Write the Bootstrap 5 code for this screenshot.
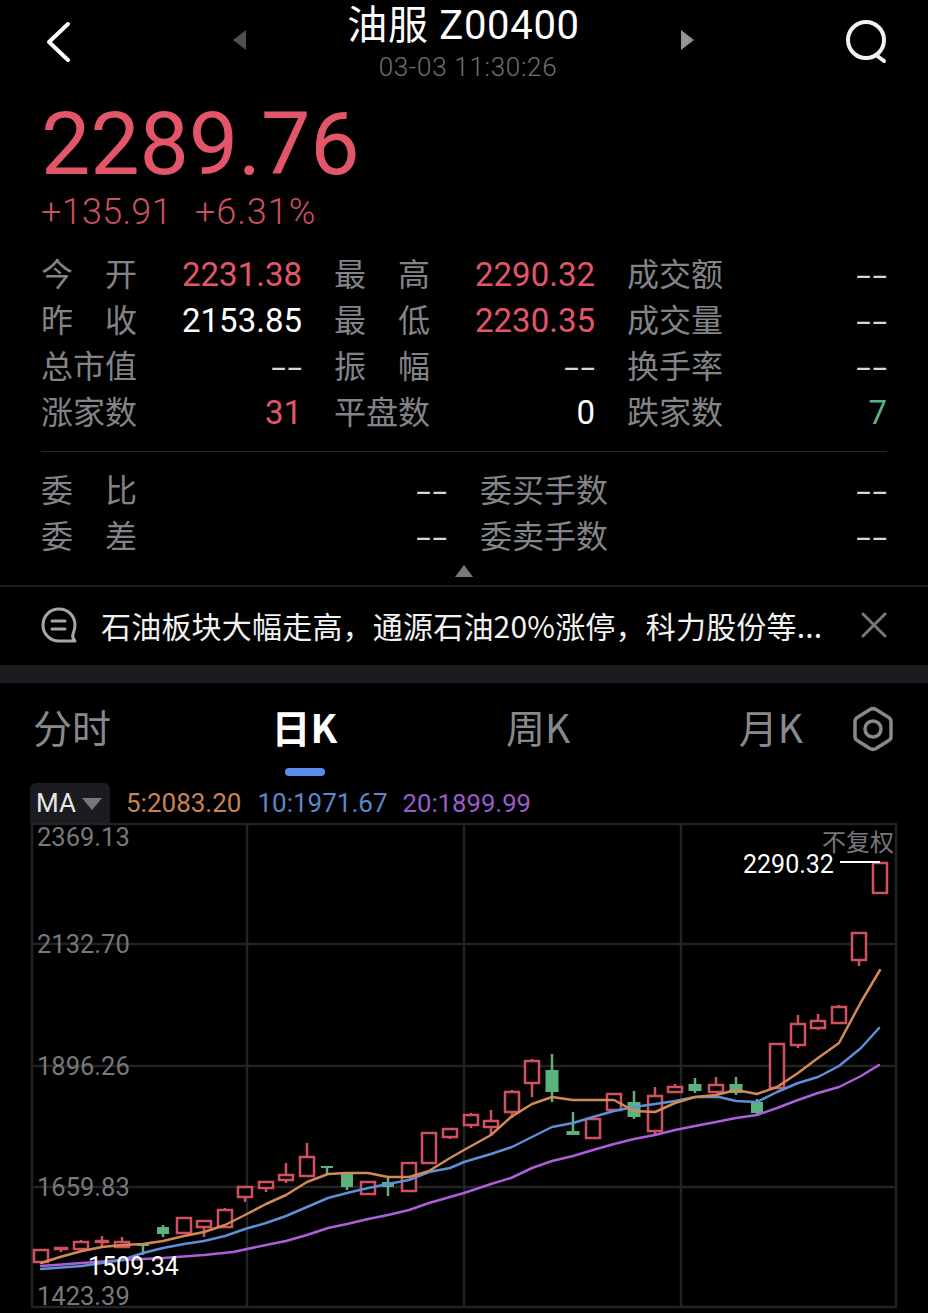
<!DOCTYPE html>
<html lang="zh">
<head>
    <meta charset="UTF-8">
    <meta name="viewport" content="width=device-width, initial-scale=1.0">
    <title>油服 Z00400</title>
    <link href="https://cdn.jsdelivr.net/npm/bootstrap@5.3.0/dist/css/bootstrap.min.css" rel="stylesheet">
    <style>
        html, body { height: 1313px; overflow: hidden; }
        body {
            background: #000;
            color: #fff;
            font-family: Roboto, "Noto Sans CJK SC", sans-serif;
        }

        .top-bar { height: 92px; padding: 0 38px 9px 45px; }
        .top-side { width: 48px; }
        .title-box { width: 461px; margin-right: 8px; }
        .title-main { font-size: 40px; line-height: 50px; letter-spacing: .7px; }
        .title-time { font-size: 26px; line-height: 32px; color: #6e6f74; font-weight: 300; letter-spacing: .7px; padding-left: 9px; }
        .side-arrow { width: 0; height: 0; border-top: 10px solid transparent; border-bottom: 10px solid transparent; margin-bottom: 4px; }
        .arrow-l { border-right: 13px solid #4d4e51; }
        .arrow-r { border-left: 13px solid #929398; }

        .price-box { padding: 5px 41px 0; height: 154px; color: #e3566a; }
        .price-now { font-size: 88px; line-height: 94px; font-weight: 400; letter-spacing: -.2px; }
        .price-sub { font-size: 36px; line-height: 42px; font-weight: 300; color: #cd5061; gap: 23px; letter-spacing: .3px; }
        .price-pct { letter-spacing: 1px; }

        .stat-grid { padding: 0 41px; }
        .stat-row { display: grid; grid-template-columns: 261px 261px 260px; gap: 32px; height: 46px; align-items: center; }
        .stat-row-wide { display: grid; grid-template-columns: 406px 407px; gap: 33px; height: 46px; align-items: center; }
        .stat-cell { display: flex; justify-content: space-between; align-items: center; font-size: 32px; line-height: 46px; }
        .stat-label { color: #838488; font-size: 32px; font-family: "Noto Sans CJK SC", sans-serif; display: flex; justify-content: space-between; width: 96px; }
        .stat-label-long { width: 128px; }
        .stat-num { font-size: 33px; padding-top: 6px; }
        .num-dash { color: #d8d8da; font-size: 32px; letter-spacing: 1px; padding-top: 6px; margin-right: -2px; transform: scaleX(1.65); transform-origin: right center; }
        .num-up { color: #e3566a; }
        .num-down { color: #5ab27f; }
        .stat-line { border-top: 1px solid #232427; margin: 21px 41px 10px; }

        .fold-bar { height: 33px; border-bottom: 2px solid #1e1f22; }
        .fold-arrow { width: 0; height: 0; border-left: 9px solid transparent; border-right: 9px solid transparent; border-bottom: 12px solid #77787c; margin-top: 11px; }

        .news-row { height: 78px; padding: 0 41px 2px; }
        .news-text { font-size: 30px; letter-spacing: .2px; font-family: "Noto Sans CJK SC", sans-serif; margin-left: 23px; flex: 1; white-space: nowrap; color: #f2f2f2; }
        .band { height: 18px; background: #1b1c1f; }

        .tab-row { height: 100px; padding: 0 33px 14px; }
        .tab-list { width: 770px; }
        .tab-item { position: relative; font-size: 39px; line-height: 48px; color: #88898d; font-family: "Noto Sans CJK SC", sans-serif; }
        .tab-active { color: #fff; font-weight: 700; }
        .tab-active::after { content: ""; position: absolute; left: 13px; width: 40px; height: 8px; bottom: -26px; border-radius: 4px; background: #5b8def; }
        .tab-gear { margin-top: 6px; margin-right: 1px; }

        .ma-row { height: 41px; padding-left: 30px; font-size: 26px; }
        .ma-btn { width: 80px; height: 41px; background: #1b1c1f; border-radius: 6px 6px 0 0; padding-left: 6px; gap: 6px; color: #e6e6e6; }
        .ma-caret { width: 0; height: 0; border-left: 10px solid transparent; border-right: 10px solid transparent; border-top: 12px solid #77787c; }
        .ma-five { color: #c98450; margin-left: 16px; }
        .ma-ten { color: #5d87c9; margin-left: 16px; }
        .ma-twenty { color: #9b5bcb; margin-left: 15px; font-size: 25.7px; }

        .chart-svg { display: block; overflow: visible; }
        .chart-svg text { font-family: Roboto, "Noto Sans CJK SC", sans-serif; font-size: 25.5px; }
        .chart-svg .axis-label { fill: #77787c; }
        .chart-svg .peak-label { fill: #fff; font-size: 25px; }
    </style>
</head>
<body>
    <div class="top-bar d-flex align-items-center justify-content-between">
        <div class="top-side">
            <svg width="28" height="42" viewBox="0 0 28 42"><path d="M23 3 4 21l19 18" fill="none" stroke="#fff" stroke-width="4" stroke-linecap="round" stroke-linejoin="round"/></svg>
        </div>
        <div class="title-box d-flex align-items-center justify-content-between">
            <span class="side-arrow arrow-l"></span>
            <div class="text-center">
                <div class="title-main">油服 Z00400</div>
                <div class="title-time">03-03 11:30:26</div>
            </div>
            <span class="side-arrow arrow-r"></span>
        </div>
        <div class="top-side text-end">
            <svg width="46" height="46" viewBox="0 0 46 46"><circle cx="22" cy="21" r="18" fill="none" stroke="#f2f2f2" stroke-width="4"/><path d="M32 36l8 6" fill="none" stroke="#f2f2f2" stroke-width="4" stroke-linecap="round"/></svg>
        </div>
    </div>

    <div class="price-box">
        <div class="price-now">2289.76</div>
        <div class="price-sub d-flex"><span>+135.91</span><span class="price-pct">+6.31%</span></div>
    </div>

    <div class="stat-grid">
        <div class="stat-row">
            <div class="stat-cell"><span class="stat-label"><span>今</span><span>开</span></span><span class="stat-num num-up">2231.38</span></div>
            <div class="stat-cell"><span class="stat-label"><span>最</span><span>高</span></span><span class="stat-num num-up">2290.32</span></div>
            <div class="stat-cell"><span class="stat-label">成交额</span><span class="num-dash">--</span></div>
        </div>
        <div class="stat-row">
            <div class="stat-cell"><span class="stat-label"><span>昨</span><span>收</span></span><span class="stat-num">2153.85</span></div>
            <div class="stat-cell"><span class="stat-label"><span>最</span><span>低</span></span><span class="stat-num num-up">2230.35</span></div>
            <div class="stat-cell"><span class="stat-label">成交量</span><span class="num-dash">--</span></div>
        </div>
        <div class="stat-row">
            <div class="stat-cell"><span class="stat-label">总市值</span><span class="num-dash">--</span></div>
            <div class="stat-cell"><span class="stat-label"><span>振</span><span>幅</span></span><span class="num-dash">--</span></div>
            <div class="stat-cell"><span class="stat-label">换手率</span><span class="num-dash">--</span></div>
        </div>
        <div class="stat-row">
            <div class="stat-cell"><span class="stat-label">涨家数</span><span class="stat-num num-up">31</span></div>
            <div class="stat-cell"><span class="stat-label">平盘数</span><span class="stat-num">0</span></div>
            <div class="stat-cell"><span class="stat-label">跌家数</span><span class="stat-num num-down">7</span></div>
        </div>
    </div>
    <div class="stat-line"></div>
    <div class="stat-grid">
        <div class="stat-row-wide">
            <div class="stat-cell"><span class="stat-label"><span>委</span><span>比</span></span><span class="num-dash">--</span></div>
            <div class="stat-cell"><span class="stat-label stat-label-long">委买手数</span><span class="num-dash">--</span></div>
        </div>
        <div class="stat-row-wide">
            <div class="stat-cell"><span class="stat-label"><span>委</span><span>差</span></span><span class="num-dash">--</span></div>
            <div class="stat-cell"><span class="stat-label stat-label-long">委卖手数</span><span class="num-dash">--</span></div>
        </div>
    </div>
    <div class="fold-bar d-flex justify-content-center"><span class="fold-arrow"></span></div>

    <div class="news-row d-flex align-items-center">
        <svg width="37" height="36" viewBox="0 0 37 36"><path d="M18 2C9 2 2 9 2 18s7 16 16 16h16c-2-2-3-4-2-7 1-3 2-5 2-9 0-9-7-16-16-16Z" fill="none" stroke="#a6a7ab" stroke-width="3" stroke-linejoin="round"/><path d="M11 14h13M11 22h13" stroke="#a6a7ab" stroke-width="3" stroke-linecap="round"/></svg>
        <div class="news-text">石油板块大幅走高，通源石油20%涨停，科力股份等...</div>
        <svg width="26" height="26" viewBox="0 0 26 26"><path d="M2 2l22 22M24 2 2 24" stroke="#77787c" stroke-width="3" stroke-linecap="round"/></svg>
    </div>
    <div class="band"></div>

    <div class="tab-row d-flex align-items-center">
        <div class="tab-list d-flex justify-content-between">
            <span class="tab-item">分时</span>
            <span class="tab-item tab-active me-2">日K</span>
            <span class="tab-item me-2">周K</span>
            <span class="tab-item">月K</span>
        </div>
        <svg class="ms-auto tab-gear" width="42" height="46" viewBox="0 0 42 46"><path d="M18 3.5a6 6 0 0 1 6 0L36 11a5 5 0 0 1 3 4.500v15a5 5 0 0 1-3 4.500L24 42.500a6 6 0 0 1-6 0L6 35a5 5 0 0 1-3-4.500v-15A5 5 0 0 1 6 11Z" fill="none" stroke="#88898d" stroke-width="3.500" stroke-linejoin="round"/><circle cx="21" cy="23" r="8" fill="none" stroke="#88898d" stroke-width="3.500"/></svg>
    </div>

    <div class="ma-row d-flex align-items-center">
        <div class="ma-btn d-flex align-items-center"><span>MA</span><span class="ma-caret"></span></div>
        <span class="ma-five">5:2083.20</span>
        <span class="ma-ten">10:1971.67</span>
        <span class="ma-twenty">20:1899.99</span>
    </div>

    <svg class="chart-svg" id="chart" width="928" height="489" viewBox="0 824 928 489"></svg>

    <script>
        // x, bodyTop, bodyBottom, wickTop, wickBottom, up (1) / down (0), body width
        const candles = [
            [41,1250,1262,1250,1262,1,14],[61,1248,1249,1247,1252,1,12],[81,1242,1249,1240,1251,1,14],
            [102,1241,1242,1236,1247,1,12],[122,1242,1247,1237,1248,1,14],[143,1244,1245,1244,1255,0,12],
            [163,1227,1233,1225,1237,0,12],[184,1218,1233,1218,1233,1,14],[204,1221,1227,1221,1237,1,14],
            [225,1210,1227,1208,1228,1,14],[245,1187,1197,1186,1202,1,14],[266,1182,1188,1181,1192,1,14],
            [286,1175,1180,1163,1183,1,14],[307,1157,1176,1143,1176,1,14],[327,1166,1167,1166,1174,0,12],
            [347,1174,1186,1174,1190,0,12],[368,1182,1194,1182,1195,1,14],[388,1182,1186,1177,1196,0,12],
            [409,1163,1191,1163,1191,1,14],[429,1133,1163,1133,1163,1,14],[450,1129,1137,1129,1139,1,14],
            [471,1115,1125,1113,1128,1,14],[491,1121,1127,1110,1136,1,14],[512,1092,1112,1090,1118,1,14],
            [532,1061,1083,1059,1097,1,14],[552,1070,1091,1054,1102,0,13],[573,1131,1134,1112,1134,0,13],
            [593,1119,1138,1119,1138,1,14],[614,1094,1110,1093,1110,1,14],[634,1102,1116,1091,1119,0,13],
            [655,1096,1131,1087,1135,1,14],[675,1087,1092,1084,1093,1,14],[695,1084,1090,1078,1093,0,13],
            [716,1085,1092,1077,1093,1,14],[736,1084,1092,1077,1095,0,13],[757,1102,1112,1099,1114,0,12],
            [777,1044,1088,1044,1088,1,14],[798,1024,1045,1015,1048,1,14],[818,1021,1028,1014,1030,1,14],
            [839,1007,1023,1005,1024,1,14],[859,933,960,933,966,1,14],[880,863,893,862,893,1,14]
        ];
        const ma5 = "41,1263 60,1257 82,1251 102,1247 122,1245 143,1244 163,1241 184,1236 204,1232 225,1225 245,1215 266,1204 286,1195 307,1182 328,1174 347,1173 368,1173 388,1177 409,1177 429,1171 450,1158 464,1150 491,1135 511,1117 532,1104 552,1097 573,1100 593,1100 614,1100 634,1111 655,1112 675,1103 695,1097 716,1095 736,1090 757,1094 777,1087 798,1073 818,1058 839,1043 861,1002 880,970";
        const ma10 = "41,1269 82,1266 102,1263 122,1260 143,1253 163,1248 184,1244 204,1241 225,1236 245,1229 266,1223 286,1216 307,1207 328,1198 347,1193 368,1188 388,1184 409,1180 429,1172 450,1168 464,1162 491,1154 512,1147 532,1137 552,1127 573,1123 593,1117 614,1111 634,1107 655,1104 675,1101 695,1097 719,1097 736,1101 757,1102 777,1092 798,1083 818,1077 839,1066 861,1048 879,1028";
        const ma20 = "41,1266 82,1263 122,1260 163,1258 204,1255 233,1252 266,1245 286,1241 307,1235 328,1228 347,1224 368,1219 388,1215 409,1210 429,1203 450,1197 464,1193 491,1184 511,1178 532,1168 552,1161 573,1156 593,1150 614,1144 634,1139 655,1135 675,1130 695,1126 716,1122 736,1118 757,1115 777,1108 798,1100 818,1093 839,1087 861,1076 879,1065";

        let html = "";
        // grid
        [824, 944, 1066, 1187, 1307].forEach(y => {
            html += `<line x1="31" x2="897" y1="${y}" y2="${y}" stroke="#222326" stroke-width="2.500"/>`;
        });
        [32, 247, 464, 681, 896].forEach(x => {
            html += `<line x1="${x}" x2="${x}" y1="824" y2="1307" stroke="#222326" stroke-width="2.500"/>`;
        });
        // candles
        candles.forEach(c => {
            const col = c[5] ? "#d0505f" : "#5ab27f";
            html += `<line x1="${c[0]}" x2="${c[0]}" y1="${c[3]}" y2="${c[4]}" stroke="${col}" stroke-width="2.500"/>`;
            if (c[5]) {
                html += `<rect x="${c[0] - c[6] / 2}" y="${c[1]}" width="${c[6]}" height="${c[2] - c[1]}" fill="#000" stroke="${col}" stroke-width="2.500"/>`;
            } else {
                html += `<rect x="${c[0] - c[6] / 2}" y="${c[1]}" width="${c[6]}" height="${c[2] - c[1] + 1}" fill="${col}"/>`;
            }
        });
        // moving averages
        [[ma20, "#ab5fd8"], [ma10, "#5f8fd6"], [ma5, "#d28a55"]].forEach(m => {
            html += `<polyline points="${m[0]}" fill="none" stroke="${m[1]}" stroke-width="2.500" stroke-linejoin="round" stroke-linecap="round"/>`;
        });
        // labels
        [["2369.13", 846], ["2132.70", 953], ["1896.26", 1075], ["1659.83", 1196], ["1423.39", 1305]].forEach(l => {
            html += `<text class="axis-label" x="37" y="${l[1]}">${l[0]}</text>`;
        });
        html += `<text class="axis-label" x="822" y="851" style="font-size:24px">不复权</text>`;
        html += `<text class="peak-label" x="743" y="873">2290.32</text>`;
        html += `<line x1="840" x2="880" y1="862" y2="862" stroke="#fff" stroke-width="2"/>`;
        html += `<text class="peak-label" x="88" y="1275">1509.34</text>`;
        document.getElementById("chart").innerHTML = html;
    </script>
    <script src="https://cdn.jsdelivr.net/npm/bootstrap@5.3.0/dist/js/bootstrap.bundle.min.js"></script>
</body>
</html>
